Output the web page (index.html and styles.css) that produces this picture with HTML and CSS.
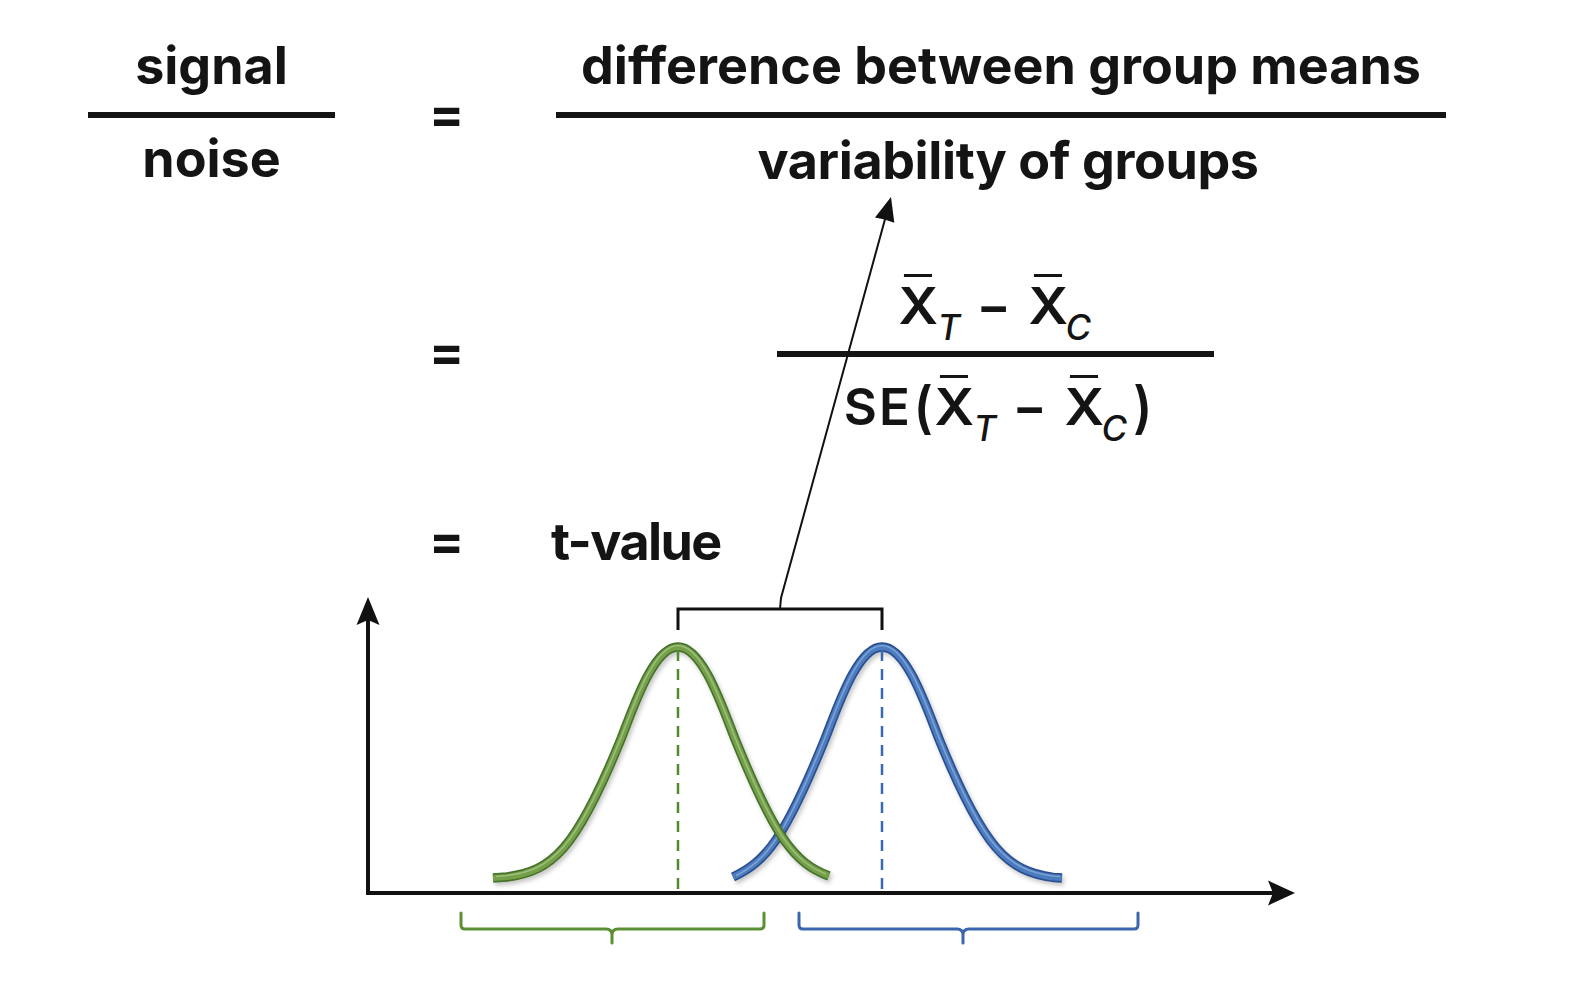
FILE: index.html
```html
<!DOCTYPE html>
<html lang="en">
<head>
<meta charset="utf-8">
<title>Signal to noise — the t-value</title>
<link rel="stylesheet" href="styles.css">
</head>
<body>
<main class="page">
  <section class="row row-1">
    <div class="frac frac-lhs words">
      <div class="num">signal</div>
      <div class="bar"></div>
      <div class="den">noise</div>
    </div>
    <div class="eq eq-1">=</div>
    <div class="frac frac-words words">
      <div class="num">difference between group means</div>
      <div class="bar"></div>
      <div class="den den-tight">variability of groups</div>
    </div>
  </section>

  <section class="row row-2">
    <div class="eq eq-2">=</div>
    <div class="frac frac-math">
      <div class="num math"><span class="xbar">X</span><span class="sub">T</span><span class="minus">−</span><span class="xbar">X</span><span class="sub sub-c">C</span></div>
      <div class="bar"></div>
      <div class="den math"><span class="se">SE</span><span class="paren">(</span><span class="xbar">X</span><span class="sub">T</span><span class="minus">−</span><span class="xbar">X</span><span class="sub sub-c">C</span><span class="paren paren-r">)</span></div>
    </div>
  </section>

  <section class="row row-3">
    <div class="eq eq-3">=</div>
    <div class="tvalue words">t-value</div>
  </section>

  <svg class="diagram" viewBox="0 0 1586 992" width="1586" height="992" aria-hidden="true">
    <defs>
      <filter id="soft" x="-10%" y="-10%" width="120%" height="130%">
        <feDropShadow dx="2" dy="3" stdDeviation="2.2" flood-color="#000" flood-opacity="0.22"/>
      </filter>
    </defs>

    <!-- arrow from bracket to denominator -->
    <path class="ink thin" d="M780,609 L781,598 L887,212"/>
    <polygon class="fill" points="891,197 894.3,222.8 884.6,219.5 875,217.5"/>

    <!-- bracket between means -->
    <path class="ink bracket" d="M678,630 V609 H882 V630"/>

    <!-- axes -->
    <path class="ink axis" d="M368,893 V618"/>
    <polygon class="fill" points="368,597 356.5,625 368,620 379.5,625"/>
    <path class="ink axis" d="M366,893 H1274"/>
    <polygon class="fill" points="1295,893 1268,880.5 1273,893 1268,905.5"/>

    <!-- blue curve -->
    <g class="curve blue" filter="url(#soft)">
      <path class="edge" d="M733,877 C766,862 785,837.5 825,739 C837,709 857,647 882,647 C907,647 927,709 939,739 C984,850 1008,871.2 1053,877.4 L1062,878"/>
      <path class="body" d="M733,877 C766,862 785,837.5 825,739 C837,709 857,647 882,647 C907,647 927,709 939,739 C984,850 1008,871.2 1053,877.4 L1062,878"/>
      <path class="shine" d="M736,875.5 C766,861 785,836 825,737.5 C837,707.5 857,645.5 882,645.5 C907,645.5 927,707.5 939,737.5 C984,849 1008,870 1053,876 L1060,876.5"/>
    </g>

    <!-- green curve -->
    <g class="curve green" filter="url(#soft)">
      <path class="edge" d="M493,878 L507,877 C552,871.2 576,850 621,739 C633,709 653,647 678,647 C703,647 723,709 735,739 C775,837.5 794,863 829,876"/>
      <path class="body" d="M493,878 L507,877 C552,871.2 576,850 621,739 C633,709 653,647 678,647 C703,647 723,709 735,739 C775,837.5 794,863 829,876"/>
      <path class="shine" d="M496,876.5 L507,875.5 C552,870 576,848.5 621,737.5 C633,707.5 653,645.5 678,645.5 C703,645.5 723,707.5 735,737.5 C775,836 794,861.5 826,874"/>
    </g>

    <!-- mean lines -->
    <path class="dash dash-green" d="M678,650 V892"/>
    <path class="dash dash-blue" d="M882,650 V892"/>

    <!-- braces -->
    <path class="brace brace-green" d="M461,913 V925 Q461,929 465,929 H606 Q612,929 612,935 V943 M764,913 V925 Q764,929 760,929 H618 Q612,929 612,935"/>
    <path class="brace brace-blue" d="M799,913 V925 Q799,929 803,929 H957 Q963,929 963,935 V943 M1138,913 V925 Q1138,929 1134,929 H969 Q963,929 963,935"/>
  </svg>
</main>
</body>
</html>
```

FILE: styles.css
```css
* {
  box-sizing: border-box;
}

html,
body {
  margin: 0;
  padding: 0;
  background: #ffffff;
}

body {
  font-family: Inter, "Noto Sans", "Liberation Sans", sans-serif;
  color: #141414;
}

.page {
  position: relative;
  width: 1586px;
  height: 992px;
  padding-top: 40px;
  overflow: hidden;
  background: #ffffff;
}

.row {
  position: relative;
  z-index: 1;
  display: flex;
  align-items: flex-start;
  padding-left: 88px;
}

.words {
  font-size: 52px;
  font-weight: 700;
  line-height: 52px;
  white-space: nowrap;
}

.frac {
  display: flex;
  flex-direction: column;
  align-items: center;
}

.frac .bar {
  align-self: stretch;
  background: #141414;
}

.frac-lhs {
  width: 247px;
}

.frac-words {
  width: 890px;
  margin-left: 87px;
}

.frac-lhs .bar,
.frac-words .bar {
  height: 6px;
  margin-top: 20px;
}

.frac-lhs .den,
.frac-words .den {
  margin-top: 15px;
}

.frac-words .den-tight {
  margin-top: 17px;
  padding-left: 14px;
  letter-spacing: -0.4px;
}

.eq {
  width: 40px;
  font-size: 52px;
  font-weight: 700;
  line-height: 52px;
  margin-left: 94px;
}

.eq-1 {
  margin-top: 48px;
}

.row-2 {
  margin-top: 93px;
}

.row-2 .eq {
  margin-left: 341px;
  margin-top: 46px;
}

.row-3 {
  margin-top: 83px;
}

.row-3 .eq {
  margin-left: 341px;
  margin-top: -1px;
}

.frac-math {
  width: 437px;
  margin-left: 308px;
}

.frac-math .bar {
  height: 6px;
  margin-top: 19px;
}

.frac-math .den {
  margin-top: 24px;
  padding-left: 8px;
}

.math {
  height: 52px;
  font-size: 51px;
  font-weight: 600;
  line-height: 52px;
  white-space: nowrap;
}

.xbar {
  position: relative;
  display: inline-block;
  line-height: 52px;
  transform: scaleX(1.08);
}

.xbar::before {
  content: "";
  position: absolute;
  left: 5px;
  top: -6px;
  width: 26px;
  height: 3px;
  background: #141414;
}

.sub {
  display: inline-block;
  font-size: 35px;
  font-weight: 500;
  font-style: italic;
  line-height: 0;
  vertical-align: -16px;
  margin-left: 1px;
}

.sub-c {
  margin-left: -1px;
}

.minus {
  display: inline-block;
  margin: 0 19px 0 16px;
}

.se {
  letter-spacing: 2px;
}

.paren {
  display: inline-block;
  margin: 0 3px 0 2px;
  transform: scaleY(1.1);
}

.paren-r {
  margin-left: 6px;
}

.tvalue {
  margin-left: 82px;
  letter-spacing: -1.6px;
}

.diagram {
  position: absolute;
  left: 0;
  top: 0;
  z-index: 2;
  pointer-events: none;
}

.ink {
  fill: none;
  stroke: #111111;
  stroke-linejoin: miter;
}

.thin {
  stroke-width: 2;
}

.bracket {
  stroke-width: 3;
}

.axis {
  stroke-width: 4;
}

.fill {
  fill: #111111;
}

.curve path {
  fill: none;
  stroke-linecap: butt;
  stroke-linejoin: round;
}

.curve .edge {
  stroke-width: 9.5;
}

.curve .body {
  stroke-width: 6.2;
}

.curve .shine {
  stroke-width: 1.6;
  stroke-opacity: 0.45;
}

.green .edge {
  stroke: #46722a;
}

.green .body {
  stroke: #74a04a;
}

.green .shine {
  stroke: #cfe3b8;
}

.blue .edge {
  stroke: #2a4f8e;
}

.blue .body {
  stroke: #4c7bbf;
}

.blue .shine {
  stroke: #bcd0ee;
}

.dash {
  fill: none;
  stroke-width: 2.5;
  stroke-dasharray: 11 8;
}

.dash-green {
  stroke: #4f8a2f;
}

.dash-blue {
  stroke: #3a69b2;
}

.brace {
  fill: none;
  stroke-width: 3;
  stroke-linecap: round;
  stroke-linejoin: round;
}

.brace-green {
  stroke: #5b8f33;
}

.brace-blue {
  stroke: #3b66ad;
}
```
